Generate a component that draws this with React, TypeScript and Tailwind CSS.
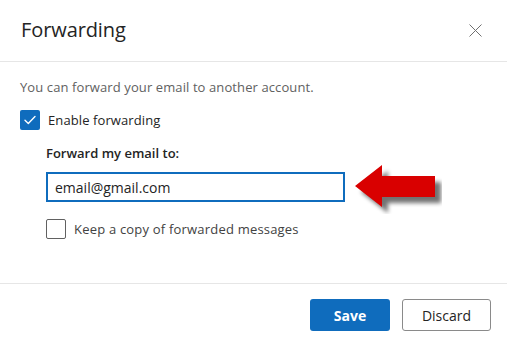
import React from "react";

export default function App() {
  return (
    <div
      className="relative w-[507px] h-[345px] bg-white text-[#242424] overflow-hidden"
      style={{ fontFamily: '"Open Sans", "Noto Sans", sans-serif' }}
    >
      <div className="h-[62px] flex items-center justify-between pl-[21px] pr-[25px] border-b border-[#e6e6e6]">
        <h1 className="text-[20px] font-medium leading-none tracking-[-0.1px] pb-[1px]">Forwarding</h1>
        <button className="w-[14px] h-[14px] flex items-center justify-center text-[#616161]">
          <svg width="13" height="13" viewBox="0 0 13 13" fill="none">
            <path d="M0.5 0.5 L12.5 12.5 M12.5 0.5 L0.5 12.5" stroke="#707070" strokeWidth="1" />
          </svg>
        </button>
      </div>

      <div className="pl-[20px] pt-[16px] h-[221px]">
        <p className="text-[13px] text-[#616161] leading-[18px] tracking-[0.1px]">
          You can forward your email to another account.
        </p>
        <div className="flex items-center gap-[8px] mt-[14px]">
          <span className="w-[20px] h-[20px] rounded-[2px] bg-[#0f6cbd] flex items-center justify-center">
            <svg width="12" height="10" viewBox="0 0 12 10" fill="none">
              <path d="M1 5.2 L4.3 8.4 L11 1.6" stroke="white" strokeWidth="1.4" strokeLinecap="round" strokeLinejoin="round" />
            </svg>
          </span>
          <span className="text-[13px] leading-[18px] tracking-[0.1px]">Enable forwarding</span>
        </div>
        <div className="pl-[26px]">
          <div className="mt-[14px] text-[13px] font-semibold leading-[18px]">Forward my email to:</div>
          <div className="mt-[10px] w-[299px] h-[30px] border-2 border-[#0f6cbd] flex items-center pl-[7px] text-[14px]">
            email@gmail.com
          </div>
          <div className="flex items-center gap-[8px] mt-[17px]">
            <span className="w-[20px] h-[20px] rounded-[2px] border border-[#616161] bg-white" />
            <span className="text-[13px] text-[#424242] leading-[18px] tracking-[0.2px]">Keep a copy of forwarded messages</span>
          </div>
        </div>
      </div>

      <div className="border-t border-[#e6e6e6] flex justify-end gap-[12px] pr-[16px] pt-[15px]">
        <button className="w-[80px] h-[32px] rounded-[3px] bg-[#0f6cbd] text-white text-[14px] font-bold">Save</button>
        <button className="w-[89px] h-[32px] rounded-[3px] border border-[#8a8a8a] bg-white text-[#242424] text-[14px] font-medium">Discard</button>
      </div>

      <svg className="absolute left-[352px] top-[162px]" width="90" height="52" viewBox="0 0 90 52">
        <defs>
          <filter id="sh" x="-20%" y="-20%" width="150%" height="150%">
            <feGaussianBlur stdDeviation="2" />
          </filter>
        </defs>
        <polygon points="6,27 33,6 33,17 86,17 86,38 33,38 33,48" fill="#000" opacity="0.55" filter="url(#sh)" transform="translate(3,3)" />
        <polygon points="3,24 30,3 30,14 83,14 83,35 30,35 30,45" fill="#d90000" />
      </svg>
    </div>
  );
}
